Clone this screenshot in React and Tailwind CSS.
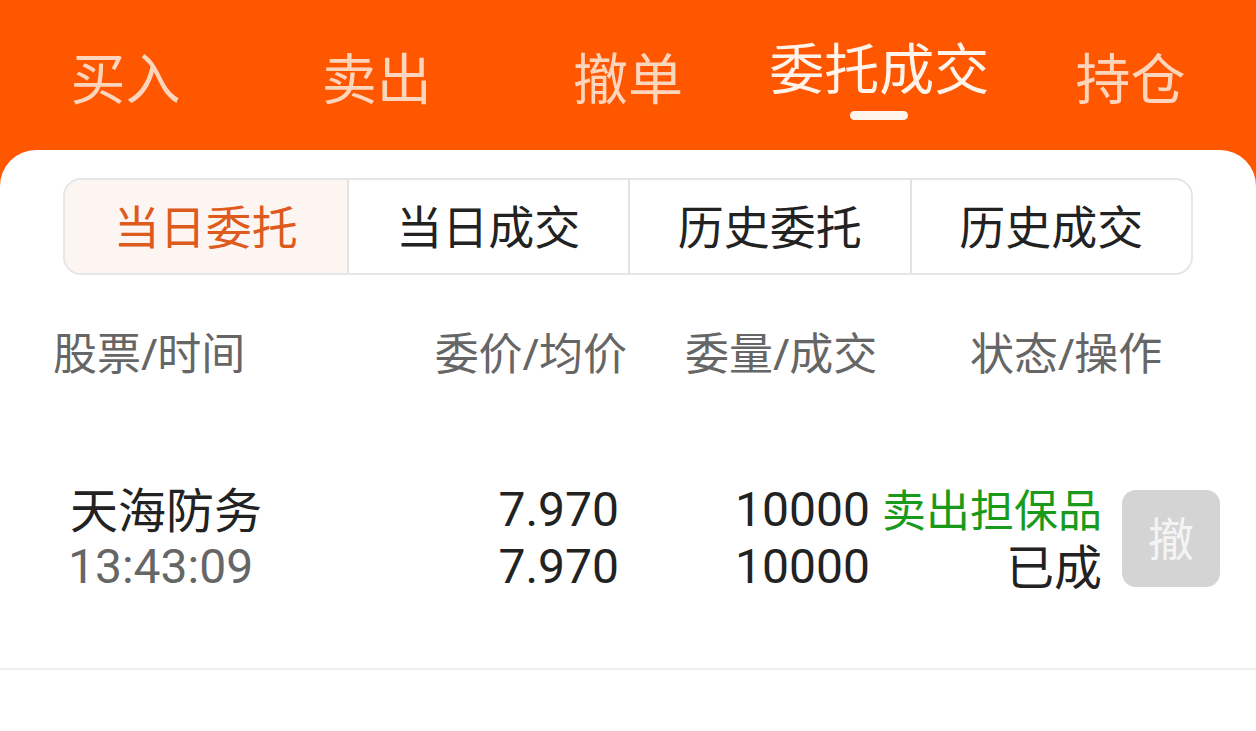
import React from "react";

const FONT = { fontFamily: '"Noto Sans", "Noto Sans CJK SC", sans-serif' };
const NUM = { fontFamily: 'Roboto, "Noto Sans", sans-serif' };

const tabs = ["买入", "卖出", "撤单", "委托成交", "持仓"];
const segs = ["当日委托", "当日成交", "历史委托", "历史成交"];

export default function App() {
  return (
    <div className="w-[1256px] h-[731px] bg-[#ff5600] overflow-hidden flex flex-col" style={FONT}>
      <div className="h-[150px] shrink-0 grid grid-cols-5">
        {tabs.map((t, i) =>
          i === 3 ? (
            <div key={t} className="flex flex-col items-center pt-[37px]">
              <div className="text-[55px] leading-[62px] text-[#fff4ec]">{t}</div>
              <div className="mt-[12px] w-[58px] h-[9px] rounded-full bg-[#fff4ec]" />
            </div>
          ) : (
            <div key={t} className="flex flex-col items-center pt-[47px]">
              <div className="text-[55px] leading-[62px] text-[#fdd5bd]">{t}</div>
            </div>
          )
        )}
      </div>
      <div className="flex-1 bg-white rounded-t-[36px] flex flex-col">
        <div className="mt-[28px] mx-[63px] h-[97px] border-2 border-[#e6e6e6] rounded-[18px] grid grid-cols-4 overflow-hidden">
          {segs.map((s, i) => (
            <div
              key={s}
              className={
                "flex items-center justify-center text-[46px] " +
                (i > 0 ? "border-l-2 border-[#e2e2e2] " : "") +
                (i === 0 ? "bg-[#fdf5f1] text-[#de5b1d]" : "text-[#222222]")
              }
            >
              {s}
            </div>
          ))}
        </div>

        <div className="mt-[48px] h-[60px] flex items-center text-[44px] text-[#666666]">
          <div className="ml-[53px] w-[250px]">股票/时间</div>
          <div className="w-[324px] text-right">委价/均价</div>
          <div className="ml-[58px] w-[200px]">委量/成交</div>
          <div className="ml-[85px]">状态/操作</div>
        </div>

        <div className="mt-[100px] pb-[74px] border-b-2 border-[#eeeeee] flex items-center text-[48px]">
          <div className="ml-[70px] w-[250px] flex flex-col gap-[3px]">
            <div className="text-[#222222] leading-[54px]">天海防务</div>
            <div className="text-[#666666] -ml-[2px] leading-[54px]" style={NUM}>13:43:09</div>
          </div>
          <div className="w-[299px] text-right text-[#222222] flex flex-col gap-[3px]" style={NUM}>
            <div className="leading-[54px]">7.970</div>
            <div className="leading-[54px]">7.970</div>
          </div>
          <div className="w-[251px] text-right text-[#222222] flex flex-col gap-[3px]" style={NUM}>
            <div className="leading-[54px]">10000</div>
            <div className="leading-[54px]">10000</div>
          </div>
          <div className="w-[232px] text-right flex flex-col gap-[3px]">
            <div className="text-[#1a9a1a] text-[44px] leading-[54px]">卖出担保品</div>
            <div className="text-[#222222] leading-[54px]">已成</div>
          </div>
          <div className="ml-[20px] w-[98px] h-[97px] rounded-[14px] bg-[#d4d4d4] flex items-center justify-center text-[46px] text-[#f4f4f4]">
            撤
          </div>
        </div>
      </div>
    </div>
  );
}
